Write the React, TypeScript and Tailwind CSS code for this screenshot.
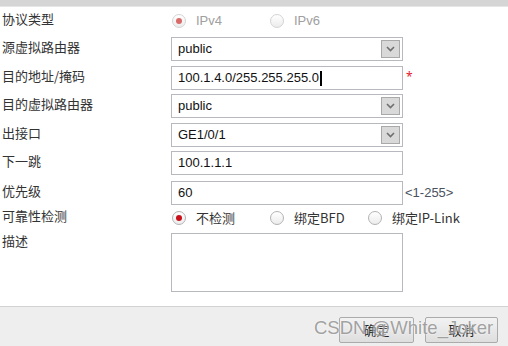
const latin = "font-['Liberation_Sans',Arial,'Noto_Sans_CJK_SC',sans-serif]";
const cjk = "font-['Noto_Sans_CJK_SC','Liberation_Sans',sans-serif]";

function Radio({ checked, disabled }: { checked?: boolean; disabled?: boolean }) {
  return (
    <span
      className={`w-[14px] h-[14px] rounded-full border flex items-center justify-center shrink-0 bg-gradient-to-b from-white to-[#ececec] ${
        disabled ? "border-[#d4d4d4]" : "border-[#b3b3b3]"
      }`}
    >
      {checked && (
        <span className={`w-[6px] h-[6px] rounded-full ${disabled ? "bg-[#d86a6a]" : "bg-[#c8101a]"}`} />
      )}
    </span>
  );
}

function Label({ children }: { children: React.ReactNode }) {
  return <div className={`w-[171px] shrink-0 pl-[2px] pb-[4px] text-[13px] text-[#333] ${cjk}`}>{children}</div>;
}

function Select({ value }: { value: string }) {
  return (
    <div className="w-[232px] h-[24px] border border-[#b8b8bf] bg-white flex items-center pl-[6px] pr-[2px]">
      <span className={`flex-1 text-[13px] text-[#111] ${latin}`}>{value}</span>
      <span className="w-[19px] h-[18px] border border-[#a9a9a9] bg-[#d9d9d9] flex items-center justify-center">
        <svg width="9" height="6" viewBox="0 0 9 6">
          <path d="M1 1l3.5 3.5L8 1" fill="none" stroke="#6f6f6f" strokeWidth="1.6" />
        </svg>
      </span>
    </div>
  );
}

function Input({ value, cursor }: { value: string; cursor?: boolean }) {
  return (
    <div className="w-[232px] h-[24px] border border-[#b8b8bf] bg-white flex items-center pl-[6px]">
      <span className={`text-[13px] text-[#111] ${latin}`}>{value}</span>
      {cursor && <span className="w-[2px] h-[15px] bg-black ml-[1px]" />}
    </div>
  );
}

export default function App() {
  return (
    <div className="w-[508px] h-[346px] bg-white flex flex-col relative overflow-hidden">
      <div className="h-[7px] bg-[#d5d5d5] border-b border-[#e6e6e6]" />

      <div className="flex-1 flex flex-col">
        {/* 协议类型 */}
        <div className="flex items-center h-[26px] mt-[1px]">
          <Label>协议类型</Label>
          <div className="flex items-center">
            <div className="w-[99px] flex items-center gap-[10px] pl-[1px]">
              <Radio checked disabled />
              <span className={`text-[13px] text-[#a0a0a0] ${latin}`}>IPv4</span>
            </div>
            <div className="flex items-center gap-[10px]">
              <Radio disabled />
              <span className={`text-[13px] text-[#a0a0a0] ${latin}`}>IPv6</span>
            </div>
          </div>
        </div>

        <div className="flex items-center h-[24px] mt-[3px]">
          <Label>源虚拟路由器</Label>
          <Select value="public" />
        </div>

        <div className="flex items-center h-[24px] mt-[5px]">
          <Label>目的地址/掩码</Label>
          <Input value="100.1.4.0/255.255.255.0" cursor />
          <span className="text-[#e0202a] text-[12px] ml-[3px] -mt-[2px]">*</span>
        </div>

        <div className="flex items-center h-[24px] mt-[4px]">
          <Label>目的虚拟路由器</Label>
          <Select value="public" />
        </div>

        <div className="flex items-center h-[24px] mt-[5px]">
          <Label>出接口</Label>
          <Select value="GE1/0/1" />
        </div>

        <div className="flex items-center h-[24px] mt-[4px]">
          <Label>下一跳</Label>
          <Input value="100.1.1.1" />
        </div>

        <div className="flex items-center h-[24px] mt-[6px]">
          <Label>优先级</Label>
          <Input value="60" />
          <span className={`ml-[2px] text-[13px] text-[#4a5260] ${latin}`}>&lt;1-255&gt;</span>
        </div>

        <div className="flex items-center h-[24px] mt-[1px]">
          <Label>可靠性检测</Label>
          <div className="flex items-center pb-[1px]">
            <div className="w-[99px] flex items-center gap-[10px] pl-[1px]">
              <Radio checked />
              <span className={`text-[13px] text-[#333] ${cjk}`}>不检测</span>
            </div>
            <div className="w-[98px] flex items-center gap-[10px]">
              <Radio />
              <span className={`text-[13px] text-[#333] ${cjk}`}>绑定BFD</span>
            </div>
            <div className="flex items-center gap-[10px]">
              <Radio />
              <span className={`text-[13px] text-[#333] ${cjk}`}>绑定IP-Link</span>
            </div>
          </div>
        </div>

        <div className="flex items-start mt-[3px]">
          <div className="-mt-[2px]">
            <Label>描述</Label>
          </div>
          <div className="w-[232px] h-[59px] border border-[#b8b8bf] bg-white" />
        </div>
      </div>

      <div className="h-[40px] border-t border-[#d2d2d2] bg-[#eeeeee] flex items-start justify-end pt-[10px] pr-[10px] gap-[11px]">
        <button className={`w-[75px] h-[26px] rounded-[2px] border border-[#ababab] bg-gradient-to-b from-[#f2f2f2] to-[#dedede] text-[13px] text-[#222] ${cjk}`}>
          确定
        </button>
        <button className={`w-[73px] h-[26px] rounded-[2px] border border-[#ababab] bg-gradient-to-b from-[#f2f2f2] to-[#dedede] text-[13px] text-[#222] ${cjk}`}>
          取消
        </button>
      </div>

      {/* watermark */}
      <div
        className={`absolute left-[314px] top-[314px] text-[18.5px] text-[#8a8a8a]/80 pointer-events-none ${latin} [text-shadow:0_0_2px_#ffffff]`}
      >
        CSDN @White_Joker
      </div>
    </div>
  );
}
